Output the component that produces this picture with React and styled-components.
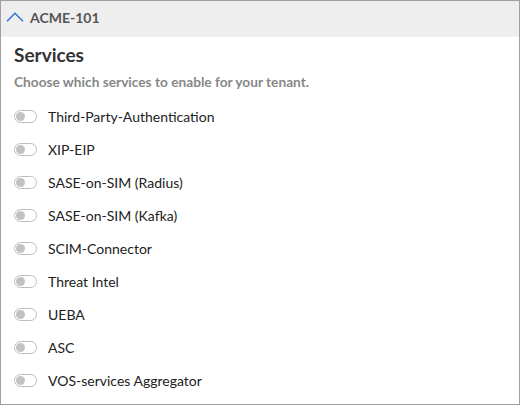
import React from 'react'
import styled, { createGlobalStyle } from 'styled-components'

const GlobalStyle = createGlobalStyle`
  html, body { margin: 0; padding: 0; background: #fff; }
  body { font-family: Lato, "Open Sans", sans-serif; }
  * { box-sizing: border-box; }
`;

const services = [
  'Third-Party-Authentication',
  'XIP-EIP',
  'SASE-on-SIM (Radius)',
  'SASE-on-SIM (Kafka)',
  'SCIM-Connector',
  'Threat Intel',
  'UEBA',
  'ASC',
  'VOS-services Aggregator',
];

const Toggle = ({ on }) => (
  <ToggleStyled on={on ? 1 : 0}>
    <span className="knob" />
  </ToggleStyled>
)

const App = () => {
  return (
    <>
      <GlobalStyle />
      <Panel>
        <Header>
          <svg width="18" height="10" viewBox="0 0 18 10">
            <path d="M1 9.2 L9 1.2 L17 9.2" fill="none" stroke="#2b6fd6" strokeWidth="1.4" />
          </svg>
          <span>ACME-101</span>
        </Header>
        <Body>
          <Title>Services</Title>
          <Subtitle>Choose which services to enable for your tenant.</Subtitle>
          <List>
            {services.map(name => (
              <Row key={name}>
                <Toggle />
                <span>{name}</span>
              </Row>
            ))}
          </List>
        </Body>
      </Panel>
    </>
  )
}

const Panel = styled.div`
  width: 520px;
  height: 405px;
  border: 1px solid #a0a0a0;
  background: #fff;
  overflow: hidden;
`;

const Header = styled.div`
  height: 36px;
  background: #eeeeee;
  display: flex;
  align-items: center;
  gap: 6px;
  padding: 0 0 4px 5px;
  color: #555;
  font-size: 14px;
  font-weight: 700;
`;

const Body = styled.div`
  padding: 6px 13px 0;
`;

const Title = styled.h2`
  margin: 0;
  font-size: 19px;
  font-weight: 700;
  color: #333;
  line-height: 24px;
`;

const Subtitle = styled.p`
  margin: 6px 0 0;
  font-size: 13.7px;
  font-weight: 700;
  color: #888;
  line-height: 18px;
`;

const List = styled.div`
  margin-top: 9px;
  display: flex;
  flex-direction: column;
`;

const Row = styled.label`
  display: flex;
  align-items: center;
  gap: 11px;
  height: 33px;
  font-size: 14px;
  color: #222;
`;

const ToggleStyled = styled.span`
  position: relative;
  width: 23px;
  height: 13px;
  border: 1px solid #bdbdbd;
  border-radius: 7px;
  background: #fff;
  flex-shrink: 0;
  .knob {
    position: absolute;
    top: 1px;
    left: ${props => props.on ? '11px' : '1px'};
    width: 9px;
    height: 9px;
    border-radius: 50%;
    background: #c2c2c2;
  }
`;

export default App
